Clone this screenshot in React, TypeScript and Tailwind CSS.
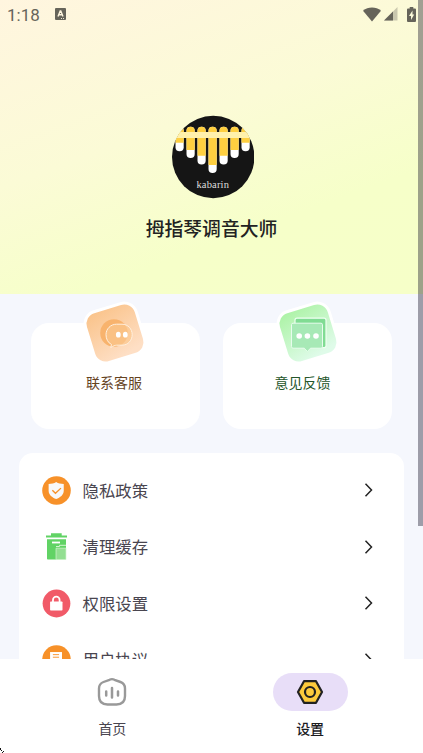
import React from 'react';

interface MenuItem {
  id: number;
  label: string;
  icon: React.ReactNode;
}

const StatusBar: React.FC = () => (
  <div className="flex h-7 items-center justify-between pl-[7px] pr-[7px] pt-px text-[#66645a]">
    <div className="flex items-center">
      <span className="w-[48px] font-[Roboto,sans-serif] text-[17px] leading-7">1:18</span>
      <svg width="11" height="12" viewBox="0 0 11 12" className="relative -top-px">
        <rect width="11" height="12" rx="1" fill="currentColor" />
        <path d="M3 8.5 5.2 3h.6L8 8.5M3.9 6.7h3.4" fill="none" stroke="#fff6df" strokeWidth="1.4" />
        <path d="M6 10.5h1M8 10.5h1" stroke="#fff6df" strokeWidth="0.9" />
      </svg>
    </div>
    <div className="relative -top-[0.5px] flex items-center">
      <svg width="18" height="15" viewBox="0 0 18 15" className="mr-[3px]">
        <path d="M0 3.7C5-.7 13-.7 18 3.7L9 14.5Z" fill="currentColor" />
      </svg>
      <svg width="14" height="14" viewBox="0 0 14 14" className="mr-[9px]">
        <path d="M13.5 0v13.5H0Z" fill="#c9c7ae" />
        <path d="M9 4.5v9H0Z" fill="currentColor" />
      </svg>
      <svg width="9" height="15" viewBox="0 0 9 15">
        <path d="M2.7 0h3.6v1.5H8a1 1 0 0 1 1 1V14a1 1 0 0 1-1 1H1a1 1 0 0 1-1-1V2.5a1 1 0 0 1 1-1h1.7Z" fill="currentColor" />
        <path d="M5.5 3.5 2 9h2v4l3.2-5.500H5.5Z" fill="#fbfad9" />
      </svg>
    </div>
  </div>
);

const tines = [
  { x: 15, split: 37.7, bottom: 46.3 },
  { x: 26, split: 45, bottom: 53 },
  { x: 37, split: 50.7, bottom: 59.5 },
  { x: 48, split: 60, bottom: 68 },
  { x: 59, split: 50.7, bottom: 59.5 },
  { x: 70, split: 45, bottom: 53 },
  { x: 81, split: 37.7, bottom: 46.3 },
];

const Logo: React.FC = () => (
  <svg width="84" height="84" viewBox="9.5 10 84 84">
    <defs>
      <clipPath id="logo-clip">
        <circle cx="52.7" cy="52" r="41.2" />
      </clipPath>
    </defs>
    <g clipPath="url(#logo-clip)">
      <rect x="5" y="8" width="90" height="90" fill="#151515" />
      {tines.map(({ x, split, bottom }) => (
        <g key={x}>
          <rect x={x} y="21.7" width="8.2" height={bottom - 21.7} rx="4.1" fill="#fff" />
          <path d={`M${x} ${split}V25.8a4.1 4.1 0 0 1 8.2 0V${split}Z`} fill="#fecf40" />
        </g>
      ))}
      <rect x="5" y="27" width="90" height="6" fill="#fff1ac" />
    </g>
    <text x="52.2" y="83.2" textAnchor="middle" fontSize="10.5" fill="#dedede" textLength="32.5" className="font-['Liberation_Serif',serif]">
      kabarin
    </text>
  </svg>
);

const SupportIcon: React.FC = () => (
  <svg width="66" height="66" viewBox="0 0 66 66">
    <defs>
      <linearGradient id="support-bg" x1="0.2" y1="0" x2="0.5" y2="1">
        <stop offset="0" stopColor="#fac48c" />
        <stop offset="1" stopColor="#fedfc5" />
      </linearGradient>
    </defs>
    <rect x="5" y="5" width="56" height="56" rx="14" transform="rotate(-17 33 33)" fill="#fff" />
    <rect x="8" y="8" width="50" height="50" rx="11" transform="rotate(-17 33 33)" fill="url(#support-bg)" />
    <circle cx="32" cy="33" r="13.8" fill="#f8b36d" />
    <path
      d="M34.500 24.200h5.500c6 0 10.200 4.800 10.200 10.500S46 45.200 40 45.200h-5.500c-1.500 0-3 .8-5.800 2.300l.8-3c-3.500-1.700-5.500-5.500-5.500-9.800 0-5.700 4.500-10.500 10.500-10.500Z"
      fill="#fbc78f"
      fillOpacity="0.7"
      stroke="#fff0df"
      strokeWidth="1"
    />
    <ellipse cx="36.3" cy="34.7" rx="2.4" ry="2.9" fill="#fff" />
    <ellipse cx="43.3" cy="34.7" rx="2.4" ry="2.9" fill="#fff" />
  </svg>
);

const FeedbackIcon: React.FC = () => (
  <svg width="66" height="66" viewBox="0 0 66 66">
    <defs>
      <linearGradient id="feedback-bg" x1="0.2" y1="0" x2="0.5" y2="1">
        <stop offset="0" stopColor="#aef3a8" />
        <stop offset="1" stopColor="#dffbe9" />
      </linearGradient>
    </defs>
    <rect x="5" y="5" width="56" height="56" rx="14" transform="rotate(-17 33 33)" fill="#fff" />
    <rect x="8" y="8" width="50" height="50" rx="11" transform="rotate(-17 33 33)" fill="url(#feedback-bg)" />
    <rect x="20" y="18.2" width="31" height="29.5" rx="2" fill="#80dc93" stroke="#eefff1" strokeWidth="1.2" />
    <path
      d="M18 23.2h28a1.500 1.500 0 0 1 1.500 1.500v22a1.500 1.500 0 0 1-1.500 1.500H35.500L32.400 51.500l-3.100-3.300H18a1.500 1.500 0 0 1-1.500-1.500v-22a1.500 1.500 0 0 1 1.500-1.500Z"
      fill="#a7e9b6"
      stroke="#e7fced"
      strokeWidth="1"
    />
    <circle cx="24.2" cy="36" r="2.8" fill="#fff" />
    <circle cx="32.4" cy="36" r="2.8" fill="#fff" />
    <circle cx="41" cy="36" r="2.8" fill="#fff" />
  </svg>
);

const PrivacyIcon: React.FC = () => (
  <svg width="29" height="29" viewBox="0 0 28 28">
    <circle cx="14" cy="14" r="13.8" fill="#f79129" />
    <path d="M13.7 5.800c2 1.400 4.500 1.800 7.300 1.900v6.500c0 4-3.500 6.600-7.300 8-3.800-1.400-7.300-4-7.300-8V7.700c2.800-.1 5.300-.5 7.300-1.900Z" fill="#f8f8f8" />
    <path d="m10 13.700 3 3 5.300-5" fill="none" stroke="#f79129" strokeWidth="1.3" />
  </svg>
);

const TrashIcon: React.FC = () => (
  <svg width="29" height="29" viewBox="0 0 29 29">
    <path d="M9 1.300h10.700V3.500H25v2H4v-2h5Z" fill="#61d365" />
    <path d="M5 7.200h19v19.500a.8.800 0 0 1-.8.800H5.800a.8.800 0 0 1-.8-.8Z" fill="#61d365" />
    <path d="M10 10.500h8" stroke="#fff" strokeWidth="1.8" />
    <path d="M14 27.500V16.200h10v11.300Z" fill="#93df92" stroke="#d4f5d1" strokeWidth="0.7" />
    <path d="M14 14.500h3.500v-1.200H24" fill="none" stroke="#d4f5d1" strokeWidth="1" />
  </svg>
);

const LockIcon: React.FC = () => (
  <svg width="29" height="29" viewBox="0 0 28 28">
    <circle cx="14" cy="14" r="13.4" fill="#f15a68" />
    <path d="M10.6 13v-2.500a3.200 3.200 0 0 1 6.400 0V13" fill="none" stroke="#fff" strokeWidth="1.7" />
    <rect x="7.8" y="12" width="12" height="8.800" rx="0.7" fill="#fff" />
  </svg>
);

const AgreementIcon: React.FC = () => (
  <svg width="29" height="29" viewBox="0 0 28 28">
    <circle cx="14" cy="14" r="13.8" fill="#f79129" />
    <path d="M7.8 6.800h11.500V21H7.8Z" fill="#fff" />
    <path d="M10.500 9.300h6M10.500 11.800h6M10.500 14.300h6" stroke="#f79129" strokeWidth="0.9" />
  </svg>
);

const menuItems: MenuItem[] = [
  { id: 1, label: '隐私政策', icon: <PrivacyIcon /> },
  { id: 2, label: '清理缓存', icon: <TrashIcon /> },
  { id: 3, label: '权限设置', icon: <LockIcon /> },
  { id: 4, label: '用户协议', icon: <AgreementIcon /> },
];

interface ActionCardProps {
  label: string;
  icon: React.ReactNode;
  iconClassName?: string;
  labelClassName: string;
}

const ActionCard: React.FC<ActionCardProps> = ({ label, icon, iconClassName = '', labelClassName }) => (
  <button className="flex h-[106px] flex-1 flex-col items-center rounded-[18px] bg-white">
    <div className={`-mt-[23px] h-[66px] ${iconClassName}`}>{icon}</div>
    <span className={`mt-[6px] text-[14px] leading-5 ${labelClassName}`}>{label}</span>
  </button>
);

const MenuRow: React.FC<{ item: MenuItem }> = ({ item }) => (
  <li className="flex h-[56.5px] items-center pl-[23px] pr-[30px]">
    {item.icon}
    <span className="ml-[11.5px] flex-1 text-[16.4px] text-[#49454f]">{item.label}</span>
    <svg width="10" height="14" viewBox="0 0 10 14">
      <path d="m1.500.800 6 6.200-6 6.200" fill="none" stroke="#222" strokeWidth="1.5" />
    </svg>
  </li>
);

const BottomNav: React.FC = () => (
  <nav className="flex h-[94px] shrink-0 bg-white pl-[13.5px] pr-[14px] pt-[14px]">
    <button className="flex flex-1 flex-col items-center">
      <span className="flex h-[38px] w-[75px] items-center justify-center">
        <svg width="30" height="30" viewBox="0 0 30 30" fill="none" stroke="#999" strokeLinecap="round">
          <path
            d="M12.500 2.800Q15 1.500 17.500 2.800L23.500 5Q28 6.700 28 11.500V19Q28 27.500 19.500 27.500H10.500Q2 27.500 2 19V11.500Q2 6.700 6.500 5Z"
            strokeWidth="2.4"
          />
          <path d="M9.2 14.500v4M15 11v9.500M21 14.500v4" strokeWidth="2.5" />
        </svg>
      </span>
      <span className="mt-[7px] text-[14px] leading-5 text-[#49454f]">首页</span>
    </button>
    <button className="flex flex-1 flex-col items-center">
      <span className="flex h-[38px] w-[75px] items-center justify-center rounded-full bg-[#e8def8]">
        <svg width="28" height="26" viewBox="0 0 28 26" stroke="#222" strokeWidth="2.2" strokeLinejoin="round">
          <path d="M8 2.200h12l6 10.800-6 10.800H8L2 13Z" fill="#fecb3c" />
          <circle cx="14" cy="13" r="5" fill="#fecb3c" />
        </svg>
      </span>
      <span className="mt-[7px] text-[14px] font-medium leading-5 text-[#1c1b1f]">设置</span>
    </button>
  </nav>
);

const App: React.FC = () => {
  return (
    <div className="relative flex h-[753px] w-[423px] flex-col overflow-hidden bg-[#f5f7fd] font-['Noto_Sans_CJK_SC',sans-serif]">
      <header className="h-[294px] shrink-0 bg-linear-[160deg,#fff5df_0%,#fbfbd6_42%,#f6ffc9_72%,#f6ffc8_100%]">
        <StatusBar />
        <div className="flex flex-col items-center pt-[87px]">
          <Logo />
          <h1 className="mt-[15px] text-[18.8px] font-medium leading-7 text-[#222]">拇指琴调音大师</h1>
        </div>
      </header>

      <main className="flex min-h-0 flex-1 flex-col overflow-hidden pt-[29px]">
        <div className="flex shrink-0 gap-[23px] px-[31px]">
          <ActionCard label="联系客服" icon={<SupportIcon />} iconClassName="pr-[2px]" labelClassName="pr-[3px] text-[#65431f]" />
          <ActionCard label="意见反馈" icon={<FeedbackIcon />} labelClassName="pr-[10px] text-[#24562a]" />
        </div>
        <ul className="mx-[19px] mt-6 shrink-0 rounded-[14px] bg-white pt-[9px]">
          {menuItems.map((item) => (
            <MenuRow key={item.id} item={item} />
          ))}
        </ul>
      </main>

      <BottomNav />

      {/* scroll indicator */}
      <div className="absolute right-0 top-0 h-[526px] w-[5px] bg-[#19162b]/40" />
      <svg width="4" height="5" viewBox="0 0 4 5" className="absolute bottom-0 left-0">
        <path d="M0 0h1v2H0ZM1 2h1v1H1ZM3 3h1v1H3ZM2 4h1v1H2Z" fill="#111" />
      </svg>
    </div>
  );
};

export default App;
